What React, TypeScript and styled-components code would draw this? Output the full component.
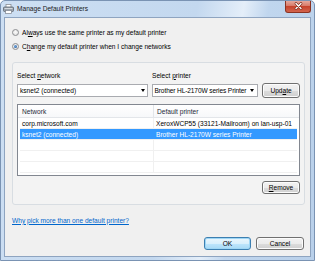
import React from 'react';
import styled, { createGlobalStyle } from 'styled-components';

const GlobalStyle = createGlobalStyle`
  html, body {
    margin: 0;
    padding: 0;
    background: #ffffff;
  }
  body {
    font-family: "Liberation Sans", Arial, sans-serif;
    font-size: 6.6px;
    color: #000;
  }
  * {
    box-sizing: border-box;
  }
`;

const Frame = styled.div`
  width: 315px;
  height: 261px;
  display: flex;
  flex-direction: column;
  border: 1px solid #7a93b3;
  border-radius: 5px 5px 0 0;
  background: linear-gradient(100deg, #cddff3 0%, #c3d8ef 55%, #e4eef9 68%, #c0d6ee 75%, #b9d0ea 100%);
`;

const TitleBar = styled.div`
  height: 16px;
  display: flex;
  align-items: center;
  padding-left: 2px;
`;

const TitleText = styled.span`
  margin-left: 3px;
  padding-bottom: 1px;
  color: #1a1a1a;
  flex: 1;
`;

const CloseButton = styled.div`
  width: 26px;
  height: 12px;
  margin-top: -5px;
  margin-right: 3px;
  border: 1px solid #8b3322;
  border-top: none;
  border-radius: 0 0 3px 3px;
  background: linear-gradient(180deg, #e6a89c 0%, #d77a68 45%, #c7432c 50%, #d2644d 100%);
  display: flex;
  align-items: center;
  justify-content: center;
`;

const Client = styled.div`
  flex: 1;
  margin: 0 3px 3px 3px;
  border: 1px solid #8ea4c0;
  background: #f0f0f0;
  padding: 7px 5px 6px 7px;
  display: flex;
  flex-direction: column;
`;

const RadioRow = styled.label`
  height: 14px;
  display: flex;
  align-items: center;
  gap: 3px;
`;

const Radio = styled.span<{ $checked?: boolean }>`
  width: 7px;
  height: 7px;
  border-radius: 50%;
  border: 1px solid #8c8e91;
  background: radial-gradient(circle at 50% 40%, #fbfbfb 0%, #dcdcdc 100%);
  display: flex;
  align-items: center;
  justify-content: center;

  &::after {
    content: '';
    display: ${(p) => (p.$checked ? 'block' : 'none')};
    width: 3px;
    height: 3px;
    border-radius: 50%;
    background: radial-gradient(circle at 40% 40%, #6fa8e0 0%, #1c4f91 100%);
  }
`;

const Panel = styled.div`
  margin-top: 9px;
  border: 1px solid #d8dde2;
  border-radius: 3px;
  background: #f3f3f3;
  padding: 7px 4px 10px 4px;
  display: flex;
  flex-direction: column;
`;

const LabelRow = styled.div`
  height: 10px;
  display: grid;
  grid-template-columns: 135px 1fr;
  align-items: center;
`;

const ControlRow = styled.div`
  margin-top: 3px;
  height: 15px;
  display: flex;
  align-items: center;
`;

const Combo = styled.div<{ $width: number; $gap?: number }>`
  width: ${(p) => p.$width}px;
  margin-right: ${(p) => p.$gap ?? 0}px;
  height: 13px;
  border: 1px solid #a9abb0;
  background: #ffffff;
  display: flex;
  align-items: center;
  padding-left: 2px;
  white-space: nowrap;
  overflow: hidden;
`;

const ComboText = styled.span<{ $tight?: boolean }>`
  flex: 1;
  min-width: 0;
  letter-spacing: ${(p) => (p.$tight ? '-0.12px' : 'normal')};
`;

const Arrow = styled.span<{ $right: number }>`
  flex: none;
  width: 0;
  height: 0;
  margin-left: 1px;
  margin-right: ${(p) => p.$right}px;
  border-left: 2.5px solid transparent;
  border-right: 2.5px solid transparent;
  border-top: 3px solid #000;
`;

const Button = styled.button<{ $width: number; $height?: number; $default?: boolean }>`
  width: ${(p) => p.$width}px;
  height: ${(p) => p.$height ?? 13}px;
  padding: 0;
  font-family: inherit;
  font-size: inherit;
  color: #000;
  border-radius: 3px;
  border: 1px solid ${(p) => (p.$default ? '#3c7fb1' : '#707070')};
  background: ${(p) =>
    p.$default
      ? 'linear-gradient(180deg, #eaf6fd 0%, #d9f0fc 50%, #bee6fd 51%, #a7d9f5 100%)'
      : 'linear-gradient(180deg, #f2f2f2 0%, #ebebeb 50%, #dddddd 51%, #cfcfcf 100%)'};
  box-shadow: inset 0 0 0 1px ${(p) => (p.$default ? '#9ed6f5' : '#fcfcfc')};
`;

const ListView = styled.div`
  margin-top: 6px;
  height: 72px;
  border: 1px solid #828790;
  background: #ffffff;
  display: flex;
  flex-direction: column;
`;

const HeaderRow = styled.div`
  height: 13px;
  display: grid;
  grid-template-columns: 136px 1fr;
  border-bottom: 1px solid #e3e6ea;
  background: linear-gradient(180deg, #ffffff 0%, #f7f8fa 100%);
  color: #1e2a3a;
`;

const HeaderCell = styled.div<{ $divider?: boolean }>`
  display: flex;
  align-items: center;
  padding-left: ${(p) => (p.$divider ? 4 : 3)}px;
  border-right: ${(p) => (p.$divider ? '1px solid #e3e6ea' : 'none')};
`;

const Row = styled.div<{ $selected?: boolean }>`
  height: 11px;
  margin: 0 2px 0 2px;
  display: grid;
  grid-template-columns: 134px 1fr;
  border-bottom: 1px solid #f0f0f0;
  background: ${(p) => (p.$selected ? '#3399ff' : 'transparent')};
  color: ${(p) => (p.$selected ? '#ffffff' : '#000')};
`;

const Cell = styled.div<{ $divider?: boolean }>`
  display: flex;
  align-items: center;
  white-space: nowrap;
  overflow: hidden;
  padding-left: 2px;
  border-right: ${(p) => (p.$divider ? '1px solid #f0f0f0' : 'none')};
`;

const RemoveRow = styled.div`
  margin-top: 5px;
  display: flex;
  justify-content: flex-end;
`;

const HelpLink = styled.a`
  margin-top: 10px;
  height: 10px;
  display: flex;
  align-items: center;
  color: #0066cc;
  text-decoration: underline;
`;

const Footer = styled.div`
  margin-top: 12px;
  display: flex;
  justify-content: flex-end;
  gap: 5px;
  padding-right: 1px;
`;

function PrinterIcon() {
  return (
    <svg width="11" height="10" viewBox="0 0 11 10">
      <rect x="3" y="0.5" width="5" height="3" fill="#fff" stroke="#8a8f96" strokeWidth="0.8" />
      <rect x="0.5" y="3" width="10" height="4.5" rx="1" fill="#9aa3ad" stroke="#5d6670" strokeWidth="0.8" />
      <rect x="1.5" y="4" width="8" height="1" fill="#d4d9de" />
      <rect x="2.5" y="6.5" width="6" height="3" fill="#ffffff" stroke="#7c848d" strokeWidth="0.7" />
    </svg>
  );
}

function CloseGlyph() {
  return (
    <svg width="9" height="8" viewBox="0 0 9 8">
      <path d="M2 1.5 L7 6.5 M7 1.5 L2 6.5" stroke="#7a2a1c" strokeWidth="2.6" strokeLinecap="round" />
      <path d="M2 1.5 L7 6.5 M7 1.5 L2 6.5" stroke="#ffffff" strokeWidth="1.4" strokeLinecap="round" />
    </svg>
  );
}

export default function App() {
  return (
    <>
      <GlobalStyle />
      <Frame>
        <TitleBar>
          <PrinterIcon />
          <TitleText>Manage Default Printers</TitleText>
          <CloseButton>
            <CloseGlyph />
          </CloseButton>
        </TitleBar>
        <Client>
          <RadioRow>
            <Radio />
            <span>Al<u>w</u>ays use the same printer as my default printer</span>
          </RadioRow>
          <RadioRow>
            <Radio $checked />
            <span>C<u>h</u>ange my default printer when I change networks</span>
          </RadioRow>

          <Panel>
            <LabelRow>
              <span>Select <u>n</u>etwork</span>
              <span>Select <u>p</u>rinter</span>
            </LabelRow>
            <ControlRow>
              <Combo $width={131} $gap={4}>
                <ComboText>ksnet2 (connected)</ComboText>
                <Arrow $right={2} />
              </Combo>
              <Combo $width={107} $gap={4}>
                <ComboText $tight>Brother HL-2170W series Printer</ComboText>
                <Arrow $right={3} />
              </Combo>
              <Button $width={38} $height={15}>Upd<u>a</u>te</Button>
            </ControlRow>
            <ListView>
              <HeaderRow>
                <HeaderCell $divider>Network</HeaderCell>
                <HeaderCell>Default printer</HeaderCell>
              </HeaderRow>
              <Row>
                <Cell $divider>corp.microsoft.com</Cell>
                <Cell>XeroxWCP55 (33121-Mailroom) on lan-usp-01</Cell>
              </Row>
              <Row $selected>
                <Cell>ksnet2 (connected)</Cell>
                <Cell>Brother HL-2170W series Printer</Cell>
              </Row>
              <Row>
                <Cell $divider />
                <Cell />
              </Row>
              <Row>
                <Cell $divider />
                <Cell />
              </Row>
              <Row>
                <Cell $divider />
                <Cell />
              </Row>
            </ListView>
            <RemoveRow>
              <Button $width={38}><u>R</u>emove</Button>
            </RemoveRow>
          </Panel>

          <HelpLink href="#">Why pick more than one default printer?</HelpLink>

          <Footer>
            <Button $width={47} $default>OK</Button>
            <Button $width={48}>Cancel</Button>
          </Footer>
        </Client>
      </Frame>
    </>
  );
}
